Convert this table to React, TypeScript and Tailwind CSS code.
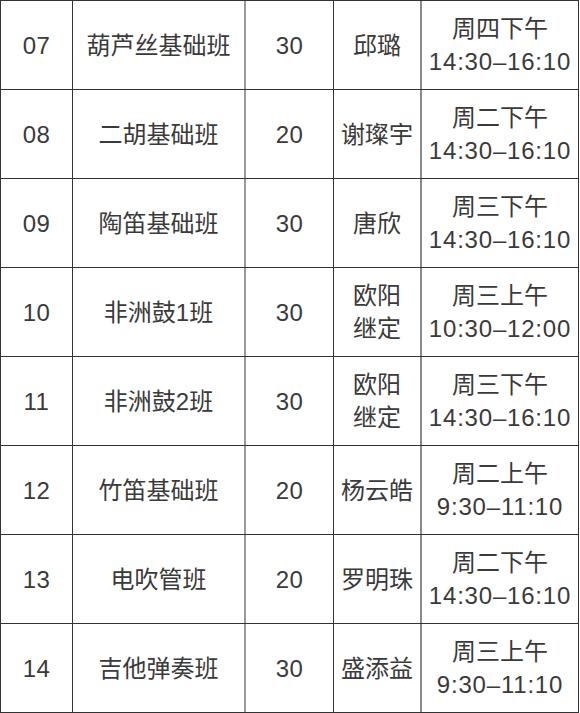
import React from "react";

type Row = { no: string; name: string; n: string; teacher: React.ReactNode; day: string; time: string };

const rows: Row[] = [
  { no: "07", name: "葫芦丝基础班", n: "30", teacher: "邱璐", day: "周四下午", time: "14:30–16:10" },
  { no: "08", name: "二胡基础班", n: "20", teacher: "谢璨宇", day: "周二下午", time: "14:30–16:10" },
  { no: "09", name: "陶笛基础班", n: "30", teacher: "唐欣", day: "周三下午", time: "14:30–16:10" },
  { no: "10", name: "非洲鼓1班", n: "30", teacher: <>欧阳<br />继定</>, day: "周三上午", time: "10:30–12:00" },
  { no: "11", name: "非洲鼓2班", n: "30", teacher: <>欧阳<br />继定</>, day: "周三下午", time: "14:30–16:10" },
  { no: "12", name: "竹笛基础班", n: "20", teacher: "杨云皓", day: "周二上午", time: "9:30–11:10" },
  { no: "13", name: "电吹管班", n: "20", teacher: "罗明珠", day: "周二下午", time: "14:30–16:10" },
  { no: "14", name: "吉他弹奏班", n: "30", teacher: "盛添益", day: "周三上午", time: "9:30–11:10" },
];

export default function App() {
  return (
    <div
      className="w-[580px] h-[713px] bg-white text-[#3a3a3a] text-[24px] leading-[33px]"
      style={{ fontFamily: '"Liberation Sans", "Noto Sans CJK SC", sans-serif' }}
    >
      <div className="w-[579px] border-t border-l border-[#333]">
        {rows.map((r) => (
          <div key={r.no} className="flex h-[89px] border-b border-[#333]">
            <div className="w-[72px] shrink-0 border-r border-[#333] flex items-center justify-center tracking-[0.5px]">{r.no}</div>
            <div className="w-[173px] shrink-0 border-r-2 border-[#9a9a9a] flex items-center justify-center">{r.name}</div>
            <div className="w-[88px] shrink-0 border-r border-[#333] flex items-center justify-center tracking-[0.5px]">{r.n}</div>
            <div className="w-[88px] shrink-0 border-r-2 border-[#8a8a8a] flex items-center justify-center text-center">{r.teacher}</div>
            <div className="w-[157px] shrink-0 border-r border-[#333] flex flex-col items-center justify-center text-center">
              <div>{r.day}</div>
              <div className="tracking-[0.8px]">{r.time}</div>
            </div>
          </div>
        ))}
      </div>
    </div>
  );
}
